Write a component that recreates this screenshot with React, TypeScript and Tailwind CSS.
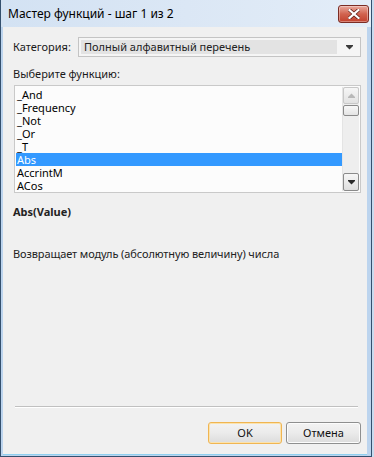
import React from "react";

const items = ["_And", "_Frequency", "_Not", "_Or", "_T", "Abs", "AccrintM", "ACos"];

function ArrowDown({ color = "#3b3b3b" }: { color?: string }) {
  return (
    <svg width="7" height="5" viewBox="0 0 7 5">
      <rect x="0" y="0" width="7" height="1" fill={color} />
      <path d="M0 1 H7 L3.5 4.5 Z" fill={color} />
    </svg>
  );
}

function ArrowUp({ color = "#b8b8b8" }: { color?: string }) {
  return (
    <svg width="7" height="5" viewBox="0 0 7 5">
      <path d="M0 4 H7 L3.5 0.5 Z" fill={color} />
      <rect x="0" y="4" width="7" height="1" fill={color} />
    </svg>
  );
}

export default function App() {
  return (
    <div
      className="w-[374px] h-[457px] bg-[#c9dbef] text-[11px] text-black overflow-hidden"
      style={{ fontFamily: "'Noto Sans', 'Open Sans', sans-serif" }}
    >
      <div className="w-[372px] h-[457px] flex flex-col border-l border-r border-b border-[#34506e] bg-[#bcd4ee]">
        {/* Title bar */}
        <div className="h-[27px] flex items-center justify-between pl-[7px] pr-[2px] bg-gradient-to-r from-[#d3e2f3] via-[#dbe7f5] to-[#e3edf8]">
          <span className="text-[12px] text-black leading-none">Мастер функций - шаг 1 из 2</span>
          <div className="w-[31px] h-[18px] rounded-[3px] border border-[#7b2c24] bg-gradient-to-b from-[#e9a99e] via-[#d1634f] to-[#c2402d] flex items-center justify-center shadow-[inset_0_0_0_1px_rgba(255,255,255,0.35)] mt-[1px]">
            <svg width="12" height="10" viewBox="0 0 12 10">
              <path d="M1.5 1 L10.5 9 M10.5 1 L1.5 9" stroke="#5a1a12" strokeWidth="3.6" strokeLinecap="square" />
              <path d="M1.5 1 L10.5 9 M10.5 1 L1.5 9" stroke="#ffffff" strokeWidth="2.2" strokeLinecap="square" />
            </svg>
          </div>
        </div>
        {/* Body with frame */}
        <div className="flex-1 flex pl-[2px] pr-[5px] pb-[1px]">
          <div className="flex-1 bg-[#f0f0f0] flex flex-col pl-[10px] pr-[6px] border-b border-[#8fd0f0]">
            {/* Category row */}
            <div className="flex items-center mt-[10px] h-[20px]">
              <span className="w-[65px] text-[#1a1a1a] leading-[14px]">Категория:</span>
              <div className="flex-1 h-[20px] border border-[#c4c4c4] bg-[#f5f5f5] flex items-center pl-[2px] pr-[7px]">
                <div className="w-[256px] h-[14px] bg-[#e3e3e3] flex items-center pl-[3px] text-[#222] leading-[14px]">
                  Полный алфавитный перечень
                </div>
                <div className="flex-1 flex justify-end">
                  <ArrowDown />
                </div>
              </div>
            </div>
            {/* label */}
            <div className="mt-[10px] leading-[14px] text-[#1a1a1a]">Выберите функцию:</div>
            {/* Listbox */}
            <div className="mt-[4px] ml-[1px] w-[347px] h-[108px] border border-[#c9c9c9] bg-[#fcfcfc] flex p-[1px]">
              <div className="flex-1 flex flex-col pt-[1px]">
                {items.map((it) => (
                  <div
                    key={it}
                    className={
                      "h-[13px] leading-[13px] pl-[1px] " +
                      (it === "Abs" ? "bg-[#3399ff] text-white" : "text-black")
                    }
                  >
                    {it}
                  </div>
                ))}
              </div>
              <div className="w-[17px] flex flex-col bg-[#eeeeee] border-l border-[#e4e4e4]">
                <div className="h-[17px] rounded-[2px] border border-[#c8c8c8] bg-gradient-to-b from-[#f6f6f6] to-[#e2e2e2] flex items-center justify-center">
                  <ArrowUp />
                </div>
                <div className="h-[11px] mt-[1px] rounded-[2px] border border-[#8a8a8a] bg-gradient-to-b from-[#f8f8f8] to-[#e4e4e4]" />
                <div className="flex-1" />
                <div className="h-[18px] rounded-[2px] border border-[#8a8a8a] bg-gradient-to-b from-[#f6f6f6] to-[#dedede] flex items-center justify-center">
                  <ArrowDown color="#2a2a2a" />
                </div>
              </div>
            </div>
            {/* Syntax */}
            <div className="mt-[12px] font-bold leading-[14px] text-[#222]">Abs(Value)</div>
            <div className="mt-[28px] leading-[14px] text-[#222] tracking-[-0.1px]">Возвращает модуль (абсолютную величину) числа</div>
            <div className="flex-1" />
            {/* separator */}
            <div className="ml-[2px] mr-[3px] h-[1px] bg-[#c0c0c0] border-b border-white box-content" />
            <div className="flex justify-end gap-[4px] mt-[14px] mb-[10px]">
              <button className="w-[74px] h-[22px] rounded-[3px] border border-[#f0b552] bg-gradient-to-b from-[#f3f3f3] via-[#ebebeb] to-[#dcdcdc] text-[11px] text-[#111] shadow-[inset_0_0_0_1px_#fbe3ae]">
                OK
              </button>
              <button className="w-[75px] h-[22px] rounded-[3px] border border-[#8e8f8f] bg-gradient-to-b from-[#f3f3f3] via-[#ebebeb] to-[#dcdcdc] text-[11px] text-[#111] shadow-[inset_0_0_0_1px_#fcfcfc]">
                Отмена
              </button>
            </div>
          </div>
        </div>
      </div>
    </div>
  );
}
